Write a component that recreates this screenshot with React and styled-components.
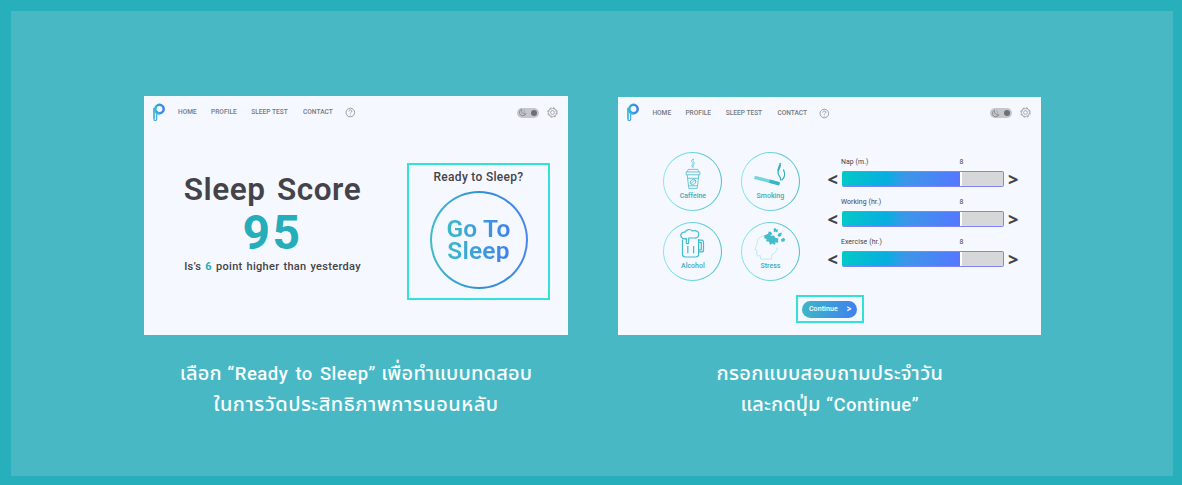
import React from "react";
import styled, { createGlobalStyle } from "styled-components";

const Global = createGlobalStyle`
  body { margin: 0; }
  * { box-sizing: border-box; }
`;

const Page = styled.main`
  width: 1182px;
  height: 485px;
  border: 11px solid #27afbc;
  border-right-width: 9px;
  border-bottom-width: 9px;
  background: #48b8c5;
  padding: 85px 0 0 133px;
  display: flex;
  gap: 50.4px;
  overflow: hidden;
  font-family: Roboto, "Noto Sans", "Liberation Sans", sans-serif;
  color: #444349;
`;

const Column = styled.section`
  width: ${(p) => p.$w}px;
  padding-top: ${(p) => p.$top || 0}px;
  display: flex;
  flex-direction: column;
`;

const Screen = styled.div`
  height: ${(p) => p.$h}px;
  background: #f5f8fe;
  display: flex;
  flex-direction: column;
  white-space: nowrap;
`;

const Header = styled.header`
  height: 32px;
  padding: 0 10px 0 8px;
  display: flex;
  align-items: center;
`;

const Nav = styled.nav`
  display: grid;
  grid-template-columns: 33px 40.3px 51.7px 42px 12px;
  align-items: center;
  margin: 0 auto 0 12px;
  padding-top: 1px;
`;

const Text = styled.span`
  display: block;
  font-size: ${(p) => p.$size}px;
  line-height: ${(p) => p.$lh || p.$size}px;
  font-weight: ${(p) => p.$weight || 500};
  letter-spacing: ${(p) => p.$ls || 0}px;
  word-spacing: ${(p) => p.$ws || 0}px;
  color: ${(p) => p.$color || "inherit"};
  white-space: nowrap;
`;

const Arrow = styled(Text)`
  font-family: "Noto Sans", sans-serif;
  font-weight: 800;
`;

const Accent = styled.b`
  color: #25adb9;
`;

const Toggle = styled.div`
  width: 22px;
  height: 10px;
  border-radius: 5px;
  background: #c4c6cb;
  display: flex;
  align-items: center;
  justify-content: space-between;
  padding: 0 2px 0 1px;
  margin: 1px 8px 0 0;
`;

const Knob = styled.i`
  width: 6px;
  height: 6px;
  border-radius: 50%;
  background: #6e6f74;
`;

const ScoreBody = styled.div`
  display: flex;
  align-items: flex-start;
`;

const Score = styled.div`
  width: 257px;
  padding-top: 43px;
  display: flex;
  flex-direction: column;
  align-items: center;
`;

const Highlight = styled.div`
  border: 2px solid #33e2d6;
  display: flex;
  flex-direction: column;
  align-items: center;
`;

const ReadyBox = styled(Highlight)`
  width: 143px;
  height: 137px;
  margin: 34.5px 0 0 6px;
  padding-top: 4px;
`;

const SleepButton = styled.button`
  width: 98px;
  height: 98px;
  margin: 6px 0 0 0;
  padding: 0;
  border: 2px solid transparent;
  border-radius: 50%;
  background: linear-gradient(#f5f8fe, #f5f8fe) padding-box,
    linear-gradient(90deg, #3dbccb, #2e8fd4 55%, #4a86f0) border-box;
  font-family: inherit;
  display: flex;
  align-items: center;
  justify-content: center;
`;

const GradientText = styled.span`
  font-size: 24.5px;
  line-height: 22px;
  font-weight: 600;
  letter-spacing: 0.2px;
  text-align: center;
  color: transparent;
  background: linear-gradient(90deg, #3cbac8, #3f7ff0);
  background-clip: text;
  -webkit-background-clip: text;
  padding-top: 1px;
`;

const FormBody = styled.div`
  display: flex;
  padding: 23.5px 0 0 45px;
`;

const Choices = styled.div`
  display: grid;
  grid-template-columns: 59px 59px;
  grid-auto-rows: 59px;
  gap: 10.5px 18.5px;
`;

const Choice = styled.div`
  border: 1px solid transparent;
  border-radius: 50%;
  background: linear-gradient(#f5f8fe, #f5f8fe) padding-box,
    linear-gradient(90deg, #8de6ea, #4cbfcb) border-box;
  display: flex;
  flex-direction: column;
  align-items: center;
  padding-top: 5px;
`;

const Sliders = styled.div`
  margin-left: 27.5px;
  padding-top: 6px;
  display: flex;
  flex-direction: column;
`;

const SliderRow = styled.div`
  height: 40px;
`;

const SliderHead = styled.div`
  width: 122.5px;
  margin-left: 13.5px;
  display: flex;
  justify-content: space-between;
  height: 13px;
`;

const SliderLine = styled.div`
  display: flex;
  align-items: center;
  justify-content: space-between;
  width: 191px;
`;

const Bar = styled.div`
  width: 162px;
  height: 16px;
  border: 1px solid #7f83fb;
  border-left-color: #04c8c8;
  border-radius: 2px;
  background: linear-gradient(90deg, #04c8c8 0, #07aee0 45px, #3a98e8 62px, #5577ff 118px, #fff 118px, #fff 120.5px, #d6d7d9 120.5px);
  background-origin: border-box;
`;

const ContinueBox = styled(Highlight)`
  width: 68px;
  height: 28px;
  margin: 14.5px 0 0 177.5px;
  justify-content: center;
`;

const ContinueButton = styled.button`
  width: 55px;
  height: 17px;
  border: 0;
  border-radius: 9px;
  padding: 0 6px 0 6.5px;
  background: linear-gradient(90deg, #3eb6c6, #3f80f0);
  color: #fff;
  font-family: inherit;
  display: flex;
  align-items: center;
  justify-content: space-between;
`;

const Caption = styled.div`
  padding-top: 22px;
  display: flex;
  flex-direction: column;
  align-items: center;
  color: #f8feff;
  font-family: "Noto Sans", "Noto Sans Thai", sans-serif;
`;

const CaptionLine = styled.p`
  margin: 0;
  height: 31px;
  font-size: 20px;
  line-height: 31px;
  font-weight: 500;
  letter-spacing: ${(p) => p.$ls}px;
  white-space: nowrap;
`;

const Latin = styled.span`
  font-family: Roboto, sans-serif;
  font-size: 18.5px;
  line-height: 1;
  letter-spacing: 0.5px;
  word-spacing: 2px;
`;

const Logo = ({ id }) => (
  <svg width="14" height="19" viewBox="0 0 14 19" fill="none">
    <defs>
      <linearGradient id={id} x1="0" y1="0" x2="14" y2="0" gradientUnits="userSpaceOnUse">
        <stop stopColor="#3cc3cf" />
        <stop offset=".5" stopColor="#2f9be0" />
        <stop offset="1" stopColor="#4a72f5" />
      </linearGradient>
    </defs>
    <circle cx="7.5" cy="6" r="4.2" stroke={`url(#${id})`} strokeWidth="2.5" />
    <path d="M1.9 5.5v10.4c0 2.2 2.8 2.2 2.8 0V10.6" stroke="#3f9fe8" strokeWidth="1.1" strokeLinecap="round" />
    <path d="M2 5.5v9.7" stroke="#3fc2cf" strokeWidth="1.6" strokeLinecap="round" />
    <path d="M2.6 5.5c0 3.4 1.8 5.2 4.9 5.2" stroke="#3cb8d4" strokeWidth="1.9" />
  </svg>
);

const Help = () => (
  <svg width="11" height="11" viewBox="0 0 11 11" fill="none" stroke="#85868b">
    <circle cx="5.3" cy="5.5" r="4.3" strokeWidth=".8" />
    <path d="M3.8 4.5c0-2 3-2 3-.2 0 1-1.5 1.1-1.5 2.2M5.3 7.6v.8" strokeWidth=".8" />
  </svg>
);

const Moon = () => (
  <svg width="9" height="9" viewBox="0 0 9 9" fill="none" stroke="#85868b" strokeWidth=".9">
    <path d="M3.5 1.2C1.1 2.4.8 5.9 3 7.3c1.9 1 4 .2 4.9-1.5C5 6.5 2.9 4 3.5 1.2Z" />
    <path d="M5.4 2.2h1.3M5.9 4h1.2" strokeWidth=".6" />
  </svg>
);

const Gear = () => (
  <svg width="11" height="11" viewBox="0 0 11 11" fill="none" stroke="#96979c">
    <circle cx="5.5" cy="5.5" r="4.7" strokeWidth="1" strokeDasharray="2.1 1.59" />
    <circle cx="5.5" cy="5.5" r="4" strokeWidth=".7" />
    <circle cx="5.5" cy="5.5" r="1.9" strokeWidth=".8" />
  </svg>
);

const icons = {
  Caffeine: (
    <g fill="none" stroke="#45bdc9" strokeWidth=".8">
      <path d="M20.2 9.6c-3.4-2.6 1.4-3.4-1-5.2-1.6-1.5-.2-3.2 1.6-3.4-1.6 1.3-.5 2 .2 3.1 1.3 2-1.9 2.7-.8 5.5Z" strokeWidth=".7" />
      <path d="M13.2 13.9h13.6v2.9H13.2zM14.3 13.7l.9-2.3h9.6l.9 2.3M14.2 17l1.6 13.4h8.4L25.8 17M14.8 20.3h10.4M15.7 27.8h8.6" />
      <ellipse cx="20" cy="24" rx="3" ry="2.4" transform="rotate(-40 20 24)" />
      <path d="M18 25.5c1.5-.2 1.2-2.3 4-3" />
    </g>
  ),
  Smoking: (
    <g fill="none">
      <path d="m4.5 19.4 25 6.4" stroke="#72d6dc" strokeWidth="3.4" />
      <path d="m19.5 23.2 10 2.6" stroke="#38b4c2" strokeWidth="3.4" />
      <path d="M30 5c2.4 5.8-5.3 6.8-.6 13.2 2.2 2.6 1 3.6 1 4.4M31.6 22.4c4.4-4.2 3.2-7.4 1.8-10.8M30.4 5.2c-.8 4-3.8 5.6-2.2 10" stroke="#31aebc" strokeWidth="1.2" />
    </g>
  ),
  Alcohol: (
    <g fill="none" stroke="#41bdc9" strokeWidth="1.2" strokeLinejoin="round">
      <path d="M9.5 11.5v14.8c0 1.8.8 2.7 2.6 2.7h10.8c1.8 0 2.7-.9 2.7-2.7V11" />
      <path d="M9 9.9C6.4 7.4 8.7 3.6 12 4.2c1.5-3.1 5.3-3.5 7.4-1.2 3.7-1.2 7 .6 6.3 4-.4 2.2-2 3.2-4 3h-6v4.4c0 1.7-2.4 1.7-2.4 0v-4c-1.7.8-3 .8-4.3-.5ZM25.8 12.2h2.7c1.3 0 2 .7 2 2v7.7c0 1.4-.7 2-2 2h-2.7M25.8 14.3h2.5v7.5h-2.5M14.8 18v7.2M20.6 18v7.2" />
    </g>
  ),
  Stress: (
    <g transform="translate(0 -1)">
      <path d="M16 8.5c-5.8.2-9.4 3.7-9 9.1L4.8 22.5l1.9.7v4.4c0 1 .8 1.4 3.6 1l.4 3.5h10.6l.7-4.4c3.7-2 5.2-4.6 5.3-7.4" fill="none" stroke="#a9e4ea" strokeWidth=".7" />
      <path d="m14.5 8.2 4-1.5 2.5 2 3-.3 1.3 2.4 3 .7-.3 4.2-2.6-.4-.3 2.7-2.7-1.4-2.4 1.1-1-3.3-2.9.2.5-2.7-2.4-.7Z" fill="#42bdc9" />
      <path d="m23.5 2 1.8-1.2.8 1.6 2 .2-.9 3-1.5-1-2.1.7.4-1.7ZM18.6 4.6l2.4.3 1.3 2.2-2 1.5-2.2-1.5ZM28.5 6.4l3.2-1-.3 3.1-2.3 1.5-1.7-1.5ZM31 12.5l2.4-1.7 1.8 1.5-.9 2.2-2.8.2Z" fill="#42bdc9" />
    </g>
  ),
};

const navItems = ["HOME", "PROFILE", "SLEEP TEST", "CONTACT"];

const TopBar = ({ id }) => (
  <Header>
    <Logo id={id} />
    <Nav>
      {navItems.map((item) => (
        <Text key={item} $size={6.6} $lh={9} $color="#77787d">{item}</Text>
      ))}
      <Help />
    </Nav>
    <Toggle>
      <Moon />
      <Knob />
    </Toggle>
    <Gear />
  </Header>
);

const Slider = ({ label }) => (
  <SliderRow>
    <SliderHead>
      <Text $size={6.9} $lh={9} $ls={0.1} $weight={400}>{label}</Text>
      <Text $size={6.9} $lh={9} $weight={400}>8</Text>
    </SliderHead>
    <SliderLine>
      <Arrow $size={18} $lh={16}>&lt;</Arrow>
      <Bar />
      <Arrow $size={18} $lh={16}>&gt;</Arrow>
    </SliderLine>
  </SliderRow>
);

export default function App() {
  return (
    <>
      <Global />
      <Page>
        <Column $w={424}>
          <Screen $h={239}>
            <TopBar id="logoLeft" />
            <ScoreBody>
              <Score>
                <Text $size={31.5} $lh={37} $ls={0.55} $ws={3} $weight={600}>Sleep Score</Text>
                <Text $size={48} $lh={50} $ls={2.5} $weight={700} $color="#25adb9">95</Text>
                <Text $size={11} $lh={18} $ls={0.3} $ws={1}>
                  Is’s <Accent>6</Accent> point higher than yesterday
                </Text>
              </Score>
              <ReadyBox>
                <Text $size={12} $lh={16} $ls={0.3}>Ready to Sleep?</Text>
                <SleepButton>
                  <GradientText>Go To<br />Sleep</GradientText>
                </SleepButton>
              </ReadyBox>
            </ScoreBody>
          </Screen>
          <Caption>
            <CaptionLine $ls={0.2}>เลือก <Latin>“Ready to Sleep”</Latin> เพื่อทำแบบทดสอบ</CaptionLine>
            <CaptionLine $ls={0.5}>ในการวัดประสิทธิภาพการนอนหลับ</CaptionLine>
          </Caption>
        </Column>
        <Column $w={423} $top={0.6}>
          <Screen $h={238.4}>
            <TopBar id="logoRight" />
            <FormBody>
              <Choices>
                {Object.keys(icons).map((name) => (
                  <Choice key={name}>
                    <svg width="40" height="34" viewBox="0 0 40 34">{icons[name]}</svg>
                    <Text $size={7} $lh={8} $color="#3fabb8">{name}</Text>
                  </Choice>
                ))}
              </Choices>
              <Sliders>
                <Slider label="Nap (m.)" />
                <Slider label="Working (hr.)" />
                <Slider label="Exercise (hr.)" />
              </Sliders>
            </FormBody>
            <ContinueBox>
              <ContinueButton>
                <Text $size={7} $ls={0.1}>Continue</Text>
                <Arrow $size={8}>&gt;</Arrow>
              </ContinueButton>
            </ContinueBox>
          </Screen>
          <Caption>
            <CaptionLine $ls={0.3}>กรอกแบบสอบถามประจำวัน</CaptionLine>
            <CaptionLine $ls={0.1}>และกดปุ่ม <Latin>“Continue”</Latin></CaptionLine>
          </Caption>
        </Column>
      </Page>
    </>
  );
}
